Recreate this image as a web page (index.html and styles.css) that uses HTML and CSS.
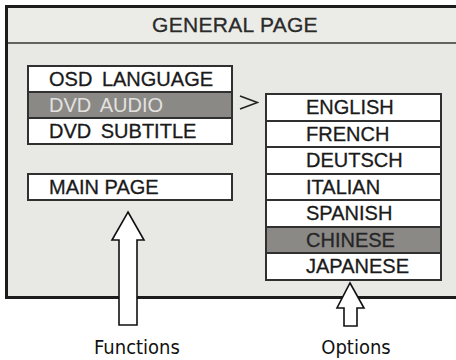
FILE: index.html
```html
<!DOCTYPE html>
<html lang="en">
<head>
<meta charset="utf-8">
<title>General Page</title>
<link rel="stylesheet" href="styles.css">
</head>
<body>
<div class="stage">
  <div class="panel">
    <div class="panel-head">GENERAL PAGE</div>
    <div class="panel-body">
      <div class="func-col">
        <ul class="list list-func">
          <li class="item">OSD LANGUAGE</li>
          <li class="item is-active">DVD AUDIO</li>
          <li class="item">DVD SUBTITLE</li>
        </ul>
        <ul class="list list-main">
          <li class="item">MAIN PAGE</li>
        </ul>
      </div>
      <svg class="pointer" width="20" height="15" viewBox="0 0 20 15" aria-hidden="true">
        <polyline points="1,1 18.5,7.5 1,14" fill="none" stroke="#222" stroke-width="1.7"/>
      </svg>
      <ul class="list list-options">
        <li class="item">ENGLISH</li>
        <li class="item">FRENCH</li>
        <li class="item">DEUTSCH</li>
        <li class="item">ITALIAN</li>
        <li class="item">SPANISH</li>
        <li class="item is-active is-dark">CHINESE</li>
        <li class="item">JAPANESE</li>
      </ul>
    </div>
  </div>
  <div class="captions">
    <span class="caption">Functions</span>
    <span class="caption">Options</span>
  </div>
  <svg class="arrow arrow-functions" width="36" height="117" viewBox="0 0 36 117" aria-hidden="true">
    <path d="M18 2 L34 30 L27 30 L27 115 L9 115 L9 30 L2 30 Z" fill="#fff" stroke="#111" stroke-width="1.6" stroke-linejoin="miter"/>
  </svg>
  <svg class="arrow arrow-options" width="31" height="47" viewBox="0 0 31 47" aria-hidden="true">
    <path d="M15 2 L29 27 L22 27 L22 45 L9 45 L9 27 L2 27 Z" fill="#fff" stroke="#111" stroke-width="1.6" stroke-linejoin="miter"/>
  </svg>
</div>
</body>
</html>
```
FILE: styles.css
```css
html, body {
  margin: 0;
  padding: 0;
  background: #ffffff;
  overflow: hidden;
}

.stage {
  position: relative;
  width: 456px;
  height: 360px;
  overflow: hidden;
  font-family: "Liberation Sans", Arial, sans-serif;
}

.panel {
  margin: 5px 0 0 5px;
  width: 457px;
  border-top: 3px solid #1c1c1c;
  border-left: 3px solid #1c1c1c;
  border-bottom: 3px solid #1c1c1c;
  background: #e8e9e4;
}

.panel-head {
  width: 454px;
  height: 34px;
  line-height: 34px;
  text-align: center;
  font-size: 21px;
  letter-spacing: 0.3px;
  color: #2a2a2a;
  -webkit-text-stroke: 0.3px #2a2a2a;
  background: #ebece7;
  border-bottom: 2px solid #626460;
}

.panel-body {
  height: 231px;
  padding: 21px 0 0 19px;
  display: flex;
  align-items: flex-start;
}

.func-col {
  width: 206px;
  display: flex;
  flex-direction: column;
  gap: 28px;
}

.list {
  list-style: none;
  margin: 0;
  padding: 0;
  border: 2px solid #303030;
  background: #ffffff;
}

.item {
  height: 24px;
  line-height: 24px;
  font-size: 20px;
  color: #1a1a1a;
  -webkit-text-stroke: 0.3px #1a1a1a;
  padding-left: 20px;
  border-top: 2px solid #303030;
  white-space: nowrap;
}

.item:first-child {
  border-top: 0;
}

.list-func .item {
  word-spacing: 4px;
}

.item.is-active {
  background: #8b8986;
  color: #e2e2e0;
  -webkit-text-stroke: 0;
}

.item.is-active.is-dark {
  color: #262626;
  -webkit-text-stroke: 0.3px #262626;
}

.pointer {
  margin: 30px 0 0 6px;
  flex: none;
}

.list-options {
  width: 173px;
  margin: 28px 0 0 6px;
}

.list-options .item {
  height: 24.5px;
  line-height: 25px;
  padding-left: 39px;
}

.captions {
  display: flex;
  gap: 99px;
  margin-top: 36px;
  padding-left: 77px;
}

.caption {
  width: 120px;
  text-align: center;
  font-family: "DejaVu Sans Condensed", "DejaVu Sans", sans-serif;
  font-stretch: condensed;
  font-size: 20px;
  line-height: 24px;
  color: #111;
}

.arrow {
  position: absolute;
}

.arrow-functions {
  left: 110px;
  top: 210px;
}

.arrow-options {
  left: 335px;
  top: 281px;
}
```
